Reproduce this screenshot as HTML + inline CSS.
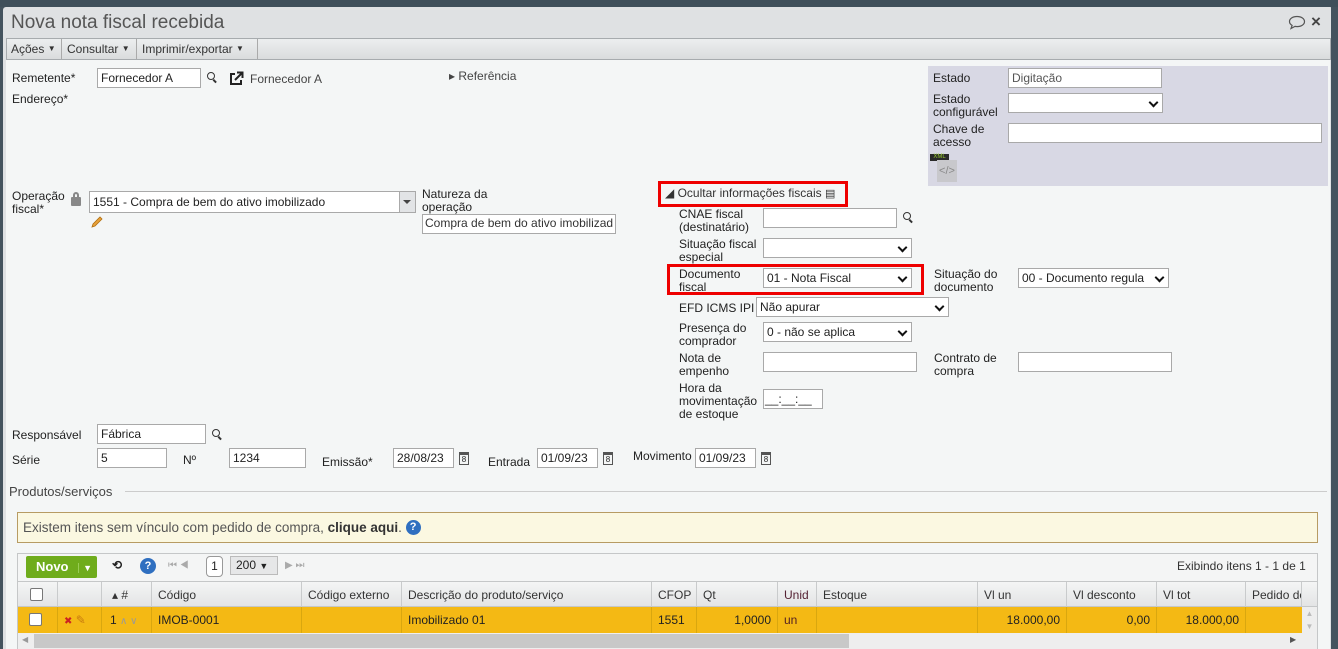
<!DOCTYPE html>
<html><head><meta charset="utf-8">
<style>
*{box-sizing:border-box;margin:0;padding:0}
html,body{width:1338px;height:649px;overflow:hidden}
body{background:#44535e;font-family:"Liberation Sans",sans-serif;font-size:12px;color:#222;position:relative}
.a{position:absolute;white-space:nowrap}
.win{position:absolute;left:3px;top:7px;width:1330px;height:642px;background:#dfe1e3;border-radius:3px 3px 0 0}
.content{position:absolute;left:6px;top:60px;width:1324px;height:589px;background:#f4f6f6}
.inp{position:absolute;background:#fff;border:1px solid #a9a9a9;height:20px;padding:2px 3px;font-size:12px;white-space:nowrap;overflow:hidden}
.sel:after{content:"";position:absolute;right:5px;top:5px;width:5px;height:5px;border-right:2px solid #111;border-bottom:2px solid #111;transform:rotate(45deg)}
.lbl{position:absolute;line-height:13px;font-size:12px;color:#222}
.red{position:absolute;border:3px solid #e00}
.cal{position:absolute;width:10px;height:13px;border:1px solid #555;border-top-width:3px;font-size:8px;line-height:9px;text-align:center}
.mag{position:absolute;width:8px;height:8px;border:1.5px solid #333;border-radius:50%}
.mag:after{content:"";position:absolute;left:6px;top:6px;width:4px;height:1.5px;background:#333;transform:rotate(45deg);transform-origin:0 0}
.th{position:absolute;top:0;height:26px;line-height:26px;border-right:1px solid #c9cbcc;padding-left:6px;color:#333;font-size:12px}
.td{position:absolute;top:0;height:26px;line-height:26px;border-right:1px solid #d9a70f;padding:0 6px;font-size:12px}
.arr{font-size:8px;vertical-align:2px}
</style></head><body>
<div class="win"></div>
<div class="a" style="left:0;top:0;width:1338px;height:7px;background:#3f4f5a"></div>
<div class="a" style="left:11px;top:12px;font-size:19px;color:#555">Nova nota fiscal recebida</div>
<svg class="a" style="left:1288px;top:15px" width="18" height="15" viewBox="0 0 18 15"><path d="M9 1.5C4.5 1.5 1.5 3.8 1.5 6.5c0 1.6 1 3 2.6 3.9L3 13.5l4-2.1c.6.1 1.3.2 2 .2 4.5 0 7.5-2.3 7.5-5S13.5 1.5 9 1.5z" fill="none" stroke="#555" stroke-width="1.2"/></svg>
<div class="a" style="left:1311px;top:12px;font-size:17px;font-weight:bold;color:#444">×</div>
<div class="a" style="left:6px;top:38px;width:1325px;height:22px;background:linear-gradient(#eceeef,#dadcdd);border:1px solid #a7abae"></div>
<div class="a" style="left:11px;top:42px;color:#333">Ações <span class="arr">▼</span></div>
<div class="a" style="left:61px;top:39px;width:1px;height:20px;background:#aaa"></div>
<div class="a" style="left:67px;top:42px;color:#333">Consultar <span class="arr">▼</span></div>
<div class="a" style="left:136px;top:39px;width:1px;height:20px;background:#aaa"></div>
<div class="a" style="left:142px;top:42px;color:#333">Imprimir/exportar <span class="arr">▼</span></div>
<div class="a" style="left:257px;top:39px;width:1px;height:20px;background:#aaa"></div>
<div class="content"></div>

<div class="lbl" style="left:12px;top:72px">Remetente*</div>
<div class="inp" style="left:97px;top:68px;width:104px">Fornecedor A</div>
<div class="mag" style="left:207px;top:72px"></div>
<svg class="a" style="left:228px;top:71px" width="16" height="16" viewBox="0 0 16 16"><path d="M7 3H3v10h10V9" fill="none" stroke="#222" stroke-width="2"/><path d="M7 9l7-7M9 1.5h5.5V7" fill="none" stroke="#222" stroke-width="2"/></svg>
<div class="lbl" style="left:250px;top:73px;color:#444">Fornecedor A</div>
<div class="lbl" style="left:12px;top:93px">Endereço*</div>
<div class="lbl" style="left:449px;top:70px;color:#444">▸ Referência</div>

<div class="a" style="left:928px;top:66px;width:400px;height:120px;background:#d8d8e4"></div>
<div class="lbl" style="left:933px;top:72px">Estado</div>
<div class="inp" style="left:1008px;top:68px;width:154px;color:#555">Digitação</div>
<div class="lbl" style="left:933px;top:93px">Estado<br>configurável</div>
<div class="inp sel" style="left:1008px;top:93px;width:155px"></div>
<div class="lbl" style="left:933px;top:123px">Chave de<br>acesso</div>
<div class="inp" style="left:1008px;top:123px;width:314px"></div>
<div class="a" style="left:930px;top:154px;width:19px;height:7px;background:#2a2a2a;color:#9c3;font-size:6px;line-height:7px;text-align:center">XML</div>
<div class="a" style="left:937px;top:160px;width:20px;height:22px;background:#c8c8cc;color:#888;font-size:11px;line-height:22px;text-align:center">&lt;/&gt;</div>

<div class="lbl" style="left:12px;top:190px">Operação<br>fiscal*</div>
<div class="a" style="left:71px;top:197px;width:10px;height:9px;background:#888;border-radius:1px"></div>
<div class="a" style="left:73px;top:192px;width:6px;height:7px;border:2px solid #888;border-bottom:none;border-radius:3px 3px 0 0"></div>
<div class="inp" style="left:89px;top:191px;width:327px;height:22px;padding-top:3px">1551 - Compra de bem do ativo imobilizado</div>
<div class="a" style="left:399px;top:192px;width:16px;height:20px;background:#e2e4e6;border-left:1px solid #aaa"></div>
<div class="a" style="left:403px;top:200px;border:4px solid transparent;border-top:4px solid #444"></div>
<svg class="a" style="left:90px;top:215px" width="14" height="14" viewBox="0 0 14 14"><path d="M2 12l1-3 7-7 2 2-7 7z" fill="#e8a23a" stroke="#b26f10" stroke-width=".8"/></svg>
<div class="lbl" style="left:422px;top:188px">Natureza da<br>operação</div>
<div class="inp" style="left:422px;top:214px;width:194px;height:20px;padding:1px 2px;color:#333">Compra de bem do ativo imobilizad</div>

<div class="red" style="left:658px;top:181px;width:190px;height:26px"></div>
<div class="lbl" style="left:665px;top:187px;color:#333">◢ Ocultar informações fiscais <span style="font-size:11px">▤</span></div>
<div class="lbl" style="left:679px;top:208px">CNAE fiscal<br>(destinatário)</div>
<div class="inp" style="left:763px;top:208px;width:134px"></div>
<div class="mag" style="left:903px;top:212px"></div>
<div class="lbl" style="left:679px;top:238px">Situação fiscal<br>especial</div>
<div class="inp sel" style="left:763px;top:238px;width:149px"></div>
<div class="red" style="left:667px;top:264px;width:257px;height:31px"></div>
<div class="lbl" style="left:679px;top:268px">Documento<br>fiscal</div>
<div class="inp sel" style="left:763px;top:268px;width:149px">01 - Nota Fiscal</div>
<div class="lbl" style="left:934px;top:268px">Situação do<br>documento</div>
<div class="inp sel" style="left:1018px;top:268px;width:151px">00 - Documento regula</div>
<div class="lbl" style="left:679px;top:302px">EFD ICMS IPI</div>
<div class="inp sel" style="left:756px;top:297px;width:193px">Não apurar</div>
<div class="lbl" style="left:679px;top:322px">Presença do<br>comprador</div>
<div class="inp sel" style="left:763px;top:322px;width:149px">0 - não se aplica</div>
<div class="lbl" style="left:679px;top:352px">Nota de<br>empenho</div>
<div class="inp" style="left:763px;top:352px;width:154px"></div>
<div class="lbl" style="left:934px;top:352px">Contrato de<br>compra</div>
<div class="inp" style="left:1018px;top:352px;width:154px"></div>
<div class="lbl" style="left:679px;top:382px">Hora da<br>movimentação<br>de estoque</div>
<div class="inp" style="left:763px;top:389px;width:60px;padding:2px 1px">__:__:__</div>

<div class="lbl" style="left:12px;top:429px">Responsável</div>
<div class="inp" style="left:97px;top:424px;width:109px">Fábrica</div>
<div class="mag" style="left:212px;top:429px"></div>
<div class="lbl" style="left:12px;top:454px">Série</div>
<div class="inp" style="left:97px;top:448px;width:70px">5</div>
<div class="lbl" style="left:183px;top:454px">Nº</div>
<div class="inp" style="left:229px;top:448px;width:77px">1234</div>
<div class="lbl" style="left:322px;top:456px">Emissão*</div>
<div class="inp" style="left:393px;top:448px;width:61px">28/08/23</div>
<div class="cal" style="left:459px;top:452px">8</div>
<div class="lbl" style="left:488px;top:456px">Entrada</div>
<div class="inp" style="left:537px;top:448px;width:61px">01/09/23</div>
<div class="cal" style="left:603px;top:452px">8</div>
<div class="lbl" style="left:633px;top:450px">Movimento</div>
<div class="inp" style="left:695px;top:448px;width:61px">01/09/23</div>
<div class="cal" style="left:761px;top:452px">8</div>

<div class="a" style="left:9px;top:484px;font-size:13px;color:#444">Produtos/serviços</div>
<div class="a" style="left:125px;top:491px;width:1202px;height:1px;background:#ccc"></div>

<div class="a" style="left:17px;top:512px;width:1301px;height:31px;background:#fbf8e1;border:1px solid #b79b63"></div>
<div class="a" style="left:23px;top:520px;color:#555;font-size:13.5px">Existem itens sem vínculo com pedido de compra, <b style="color:#333">clique aqui</b>. <span style="display:inline-block;width:15px;height:15px;border-radius:50%;background:#2f6fc0;color:#fff;font-size:11px;font-weight:bold;line-height:15px;text-align:center;vertical-align:2px">?</span></div>

<div class="a" style="left:17px;top:553px;width:1301px;height:96px;background:#f4f5f5;border:1px solid #c5c7c8"></div>
<div class="a" style="left:26px;top:556px;width:71px;height:22px;background:#6fac1c;border-radius:2px;color:#fff;font-weight:bold;font-size:13px;line-height:22px;padding-left:10px">Novo <span style="font-size:9px;margin-left:6px;border-left:1px solid #9c5;padding-left:4px">▼</span></div>
<div class="a" style="left:112px;top:558px;font-size:12px;font-weight:bold">⟲</div>
<div class="a" style="left:140px;top:558px;width:16px;height:16px;border-radius:50%;background:#2f6fc0;color:#fff;font-size:11px;font-weight:bold;line-height:16px;text-align:center">?</div>
<div class="a" style="left:168px;top:560px;color:#aaa;font-size:10px">⏮ ◀</div>
<div class="a" style="left:206px;top:556px;width:17px;height:21px;border:1px solid #999;border-radius:4px;background:#fff;text-align:center;line-height:19px">1</div>
<div class="a" style="left:230px;top:556px;width:48px;height:19px;border:1px solid #bbb;background:#e6e7e8;padding-left:5px;line-height:17px">200 <span style="font-size:9px">▼</span></div>
<div class="a" style="left:285px;top:560px;color:#aaa;font-size:10px">▶ ⏭</div>
<div class="a" style="left:1177px;top:559px;color:#333">Exibindo itens 1 - 1 de 1</div>

<div class="a" style="left:18px;top:581px;width:1299px;height:26px;background:linear-gradient(#f4f5f5,#e3e4e5);border-top:1px solid #c5c7c8;border-bottom:1px solid #c5c7c8">
<div class="th" style="left:0;width:40px"><div style="margin:6px 0 0 6px;width:13px;height:13px;border:1px solid #777;background:#fff;border-radius:2px"></div></div>
<div class="th" style="left:40px;width:44px"></div>
<div class="th" style="left:84px;width:50px;padding-left:10px">▴ #</div>
<div class="th" style="left:134px;width:150px">Código</div>
<div class="th" style="left:284px;width:100px">Código externo</div>
<div class="th" style="left:384px;width:250px">Descrição do produto/serviço</div>
<div class="th" style="left:634px;width:45px">CFOP</div>
<div class="th" style="left:679px;width:81px">Qt</div>
<div class="th" style="left:760px;width:39px;color:#523">Unid</div>
<div class="th" style="left:799px;width:161px">Estoque</div>
<div class="th" style="left:960px;width:89px">Vl un</div>
<div class="th" style="left:1049px;width:90px">Vl desconto</div>
<div class="th" style="left:1139px;width:89px">Vl tot</div>
<div class="th" style="left:1228px;width:56px;overflow:hidden">Pedido de</div>
</div>
<div class="a" style="left:18px;top:607px;width:1284px;height:26px;background:#f4b914">
<div class="td" style="left:0;width:40px"><div style="margin:6px 0 0 5px;width:13px;height:13px;border:1px solid #777;background:#fff;border-radius:2px"></div></div>
<div class="td" style="left:40px;width:44px"><span style="color:#c22;font-size:10px">✖</span> <span style="color:#c77a10">✎</span></div>
<div class="td" style="left:84px;width:50px;padding-left:8px">1 <span style="color:#999;font-size:10px">∧ ∨</span></div>
<div class="td" style="left:134px;width:150px">IMOB-0001</div>
<div class="td" style="left:284px;width:100px"></div>
<div class="td" style="left:384px;width:250px">Imobilizado 01</div>
<div class="td" style="left:634px;width:45px">1551</div>
<div class="td" style="left:679px;width:81px;text-align:right">1,0000</div>
<div class="td" style="left:760px;width:39px;color:#522">un</div>
<div class="td" style="left:799px;width:161px"></div>
<div class="td" style="left:960px;width:89px;text-align:right">18.000,00</div>
<div class="td" style="left:1049px;width:90px;text-align:right">0,00</div>
<div class="td" style="left:1139px;width:89px;text-align:right">18.000,00</div>
</div>
<div class="a" style="left:1302px;top:607px;width:15px;height:42px;background:#eee;color:#bbb;font-size:8px;text-align:center;line-height:13px">▲<br>▼</div>
<div class="a" style="left:18px;top:633px;width:1284px;height:16px;background:#eee"></div>
<div class="a" style="left:34px;top:634px;width:815px;height:14px;background:#c8c8c8"></div>
<div class="a" style="left:22px;top:635px;color:#999;font-size:8px">◀</div>
<div class="a" style="left:1290px;top:635px;color:#555;font-size:8px">▶</div>
<div class="a" style="left:1331px;top:7px;width:7px;height:642px;background:#44535e"></div>
</body></html>
